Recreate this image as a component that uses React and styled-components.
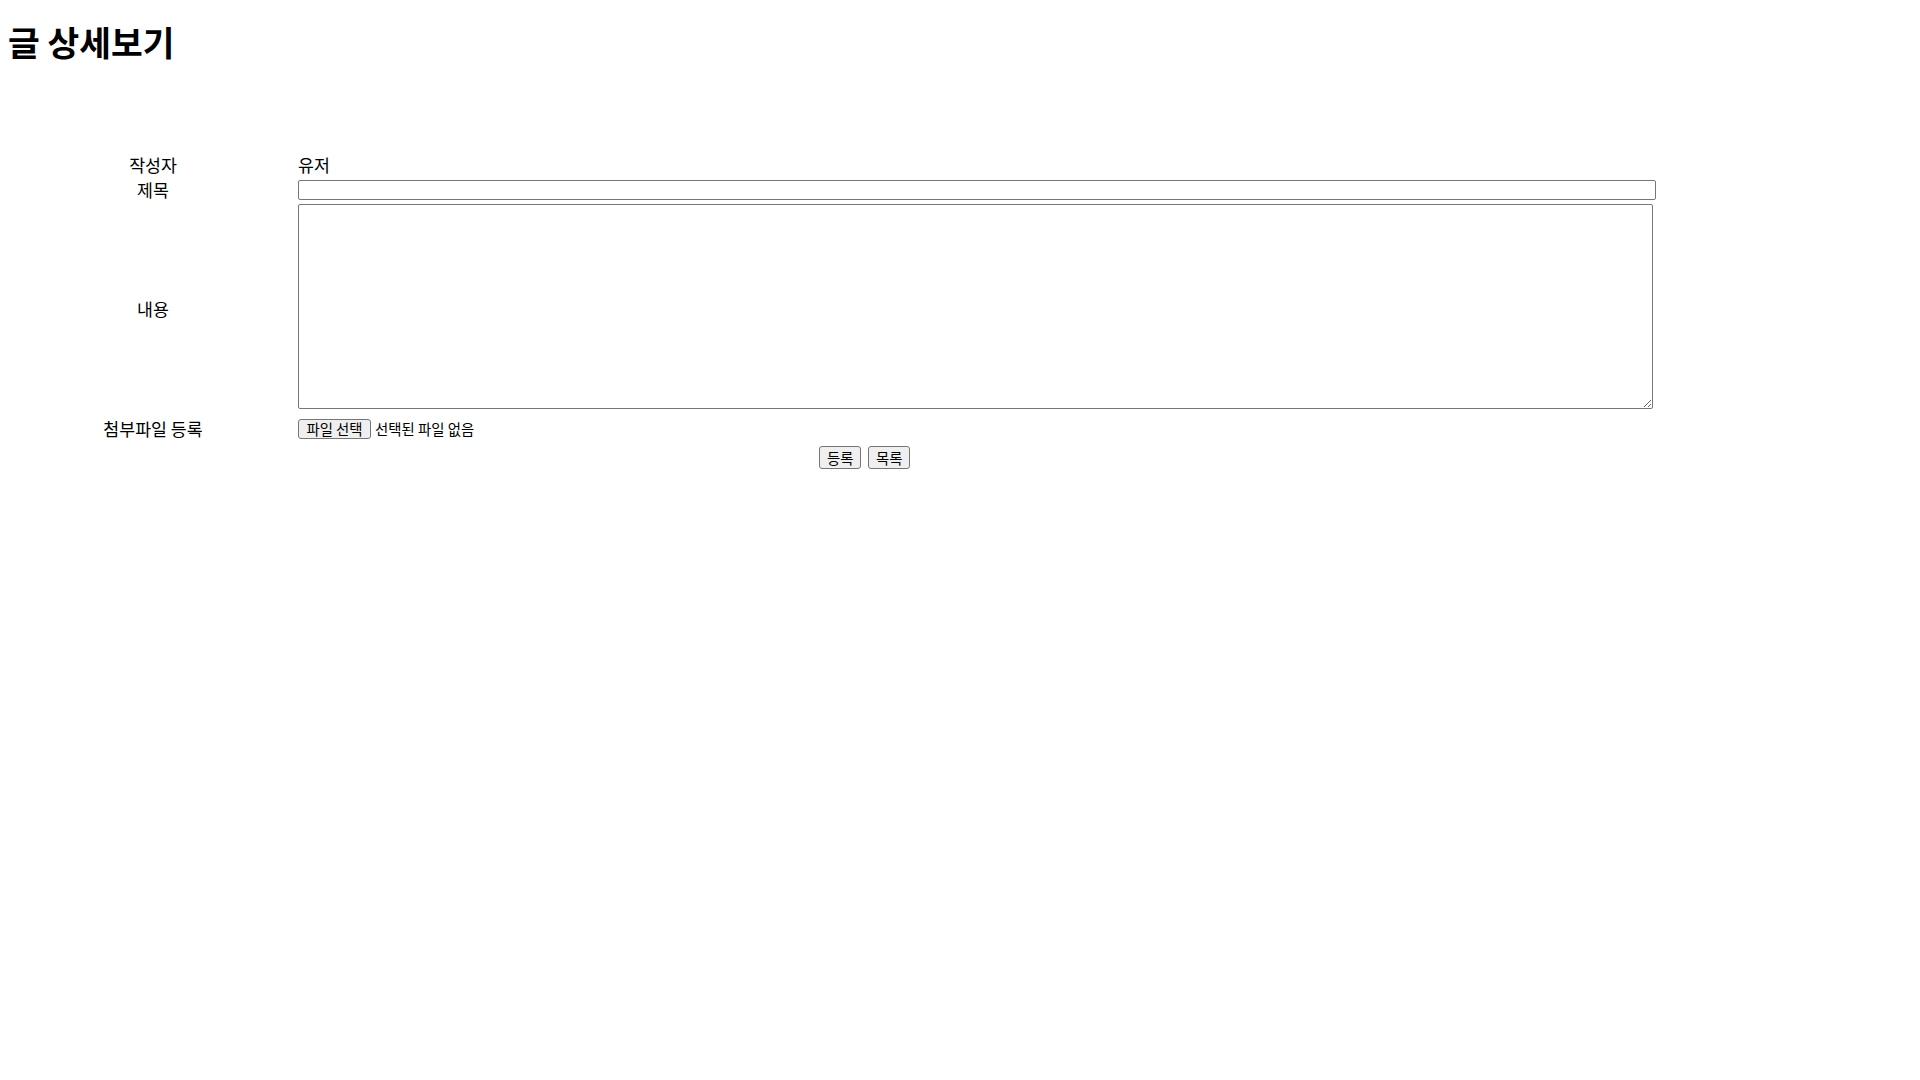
import React from "react";
import styled, { createGlobalStyle } from "styled-components";

const Global = createGlobalStyle`
  html, body { background: #ffffff; }
  body {
    margin: 0;
    padding: 8px;
    font-family: "Noto Sans CJK KR", "Noto Sans", sans-serif;
    color: #000000;
  }
`;

const Title = styled.h1`
  margin: 15px 0 0;
  font-size: 34.5px;
  line-height: 37px;
  font-weight: 700;
  font-family: "Noto Sans CJK KR", sans-serif;
`;

const FormGrid = styled.form`
  width: 90%;
  margin-top: 91px;
  padding: 2px;
  box-sizing: border-box;
  display: grid;
  grid-template-columns: 286px 1fr;
  grid-template-rows: 23px 24px 210px 26px 27px;
  column-gap: 2px;
  row-gap: 2px;
`;

const Label = styled.div`
  display: flex;
  align-items: center;
  justify-content: center;
  font-size: 17.3px;
  line-height: 22px;
  white-space: nowrap;
`;

const Value = styled.div`
  display: flex;
  align-items: ${(p) => (p.$top ? "flex-start" : "center")};
  font-size: 17.3px;
  line-height: 22px;
  gap: 4px;
`;

const TextInput = styled.input`
  width: 1358px;
  height: 20px;
  box-sizing: border-box;
  border: 1px solid #767676;
  border-radius: 2px;
  padding: 1px 2px;
  font-size: 13.33px;
  background: #fff;
  outline: none;
`;

const TextArea = styled.textarea`
  width: 1355px;
  height: 205px;
  box-sizing: border-box;
  border: 1px solid #767676;
  border-radius: 2px;
  padding: 2px;
  font-family: "Liberation Mono", monospace;
  font-size: 13.33px;
  outline: none;
  resize: both;
`;

const NativeButton = styled.button`
  height: ${(p) => p.$h || 20}px;
  width: ${(p) => p.$w}px;
  box-sizing: border-box;
  padding: 0;
  border: 1px solid #767676;
  border-radius: 3px;
  background: #efefef;
  font-family: "Noto Sans CJK KR", sans-serif;
  font-size: 14.4px;
  line-height: 16px;
  color: #000;
  display: inline-flex;
  align-items: center;
  justify-content: center;
  cursor: default;
`;

const FileStatus = styled.span`
  font-size: 14.4px;
  line-height: 16px;
`;

const ButtonRow = styled.div`
  grid-column: 1 / -1;
  display: flex;
  justify-content: center;
  align-items: center;
  gap: 7px;
`;

export default function App() {
  return (
    <>
      <Global />
      <Title>글 상세보기</Title>
      <FormGrid onSubmit={(e) => e.preventDefault()}>
        <Label>작성자</Label>
        <Value>유저</Value>

        <Label>제목</Label>
        <Value>
          <TextInput type="text" />
        </Value>

        <Label>내용</Label>
        <Value $top>
          <TextArea />
        </Value>

        <Label>첨부파일 등록</Label>
        <Value>
          <NativeButton type="button" $w={73}>파일 선택</NativeButton>
          <FileStatus>선택된 파일 없음</FileStatus>
        </Value>

        <ButtonRow>
          <NativeButton type="submit" $h={23} $w={42}>등록</NativeButton>
          <NativeButton type="button" $h={23} $w={42}>목록</NativeButton>
        </ButtonRow>
      </FormGrid>
    </>
  );
}
